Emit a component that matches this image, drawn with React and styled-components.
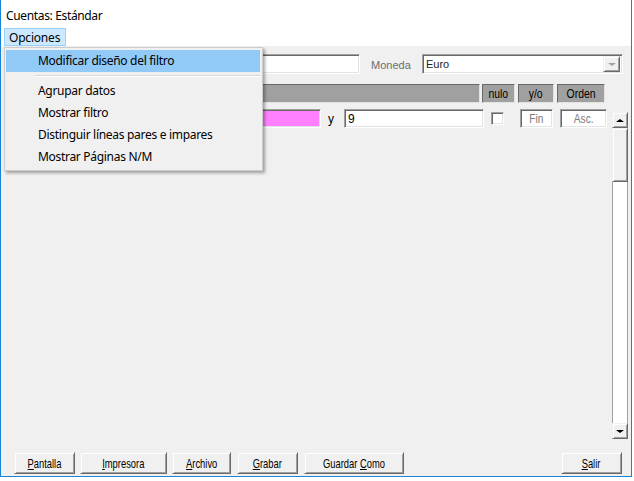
import React from "react";
import styled, { createGlobalStyle, css } from "styled-components";

const Global = createGlobalStyle`
  html, body { margin: 0; padding: 0; background: #ffffff; overflow: hidden; }
  * { box-sizing: border-box; }
`;

const uiFont = `"Segoe UI", "Noto Sans", "Liberation Sans", sans-serif`;
const formFont = `"Liberation Sans", Arial, sans-serif`;

const Window = styled.div`
  position: relative;
  width: 632px;
  height: 477px;
  border-left: 1px solid #1883d7;
  border-right: 1px solid #1883d7;
  border-bottom: 1px solid #1883d7;
  display: flex;
  flex-direction: column;
  background: #ffffff;
`;

const TitleBar = styled.div`
  height: 28px;
  padding: 2px 0 0 5px;
  display: flex;
  align-items: center;
  font-family: ${uiFont};
  font-size: 12px;
  letter-spacing: -0.35px;
  color: #000;
`;

const MenuBar = styled.div`
  height: 18px;
  padding-left: 3px;
  display: flex;
`;

const MenuBarItem = styled.div`
  height: 18px;
  width: 62px;
  padding-left: 4px;
  display: flex;
  align-items: center;
  background: ${(p) => (p.$open ? "#cce8ff" : "transparent")};
  border: 1px solid ${(p) => (p.$open ? "#99d1ff" : "transparent")};
  font-family: ${uiFont};
  font-size: 12px;
  letter-spacing: -0.2px;
  color: #000;
`;

const Content = styled.div`
  flex: 1;
  background: #f0f0f0;
  display: flex;
  flex-direction: column;
  font-family: ${formFont};
  font-size: 11px;
`;

const Row = styled.div`
  display: flex;
  align-items: center;
  margin-top: ${(p) => p.$mt}px;
  padding-left: ${(p) => p.$pl || 0}px;
  height: ${(p) => p.$h}px;
`;

const sunken = css`
  border: 1px solid;
  border-color: #a0a0a0 #ffffff #ffffff #a0a0a0;
  box-shadow: inset 1px 1px 0 #696969, inset -1px -1px 0 #e3e3e3;
`;

const TextBox = styled.div`
  ${sunken};
  width: ${(p) => p.$w}px;
  height: ${(p) => p.$h || 19}px;
  margin-left: ${(p) => p.$ml || 0}px;
  background: ${(p) => p.$bg || "#ffffff"};
  color: ${(p) => (p.$dim ? "#7a7a7a" : "#000")};
  display: flex;
  align-items: center;
  justify-content: ${(p) => (p.$center ? "center" : "flex-start")};
  padding-left: ${(p) => (p.$center ? 0 : 3)}px;
  font-family: ${formFont};
  font-size: ${(p) => (p.$big ? 12 : 11)}px;
`;

const Condensed = styled.span`
  display: inline-block;
  white-space: pre;
  transform: scaleX(${(p) => p.$k || 0.8});
`;

const Label = styled.div`
  width: ${(p) => p.$w}px;
  margin-left: ${(p) => p.$ml || 0}px;
  color: ${(p) => p.$color || "#6d6d6d"};
  font-size: ${(p) => p.$size || 11}px;
  padding-top: 1px;
`;

const Combo = styled(TextBox)`
  padding-right: 2px;
`;

const ComboText = styled.span`
  flex: 1;
  color: #222;
`;

const ComboButton = styled.div`
  width: 17px;
  height: 16px;
  background: #f0f0f0;
  border: 1px solid;
  border-color: #f0f0f0 #696969 #696969 #f0f0f0;
  box-shadow: inset 1px 1px 0 #ffffff, inset -1px -1px 0 #a0a0a0;
  display: flex;
  align-items: center;
  justify-content: center;
`;

const Arrow = styled.div`
  width: 0;
  height: 0;
  border-left: ${(p) => p.$s}px solid transparent;
  border-right: ${(p) => p.$s}px solid transparent;
  ${(p) =>
    p.$up
      ? `border-bottom: ${p.$s - 1}px solid ${p.$color};`
      : `border-top: ${p.$s - 1}px solid ${p.$color};`}
`;

const HeaderBar = styled.div`
  width: ${(p) => p.$w}px;
  height: 19px;
  margin-left: ${(p) => p.$ml || 0}px;
  background: #a0a0a0;
  border: 1px solid;
  border-color: #696969 #e3e3e3 #e3e3e3 #696969;
  display: flex;
  align-items: center;
  justify-content: center;
  color: #000;
  font-size: 13px;
  font-family: ${formFont};
`;

const FilterPanel = styled.div`
  display: flex;
  margin-top: 6px;
  height: 333px;
`;

const FilterRows = styled.div`
  display: flex;
  flex-direction: column;
  width: 611px;
`;

const CheckBox = styled.div`
  width: 13px;
  height: 13px;
  margin-left: ${(p) => p.$ml}px;
  background: #fff;
  border: 1px solid;
  border-color: #a0a0a0 #ffffff #ffffff #a0a0a0;
  box-shadow: inset 1px 1px 0 #696969, inset -1px -1px 0 #e3e3e3;
`;

const ScrollBar = styled.div`
  margin-top: 3px;
  width: 16px;
  height: 327px;
  display: flex;
  flex-direction: column;
`;

const raised = css`
  background: #f0f0f0;
  border: 1px solid;
  border-color: #f0f0f0 #696969 #696969 #f0f0f0;
  box-shadow: inset 1px 1px 0 #ffffff, inset -1px -1px 0 #a0a0a0;
`;

const ScrollButton = styled.div`
  ${raised};
  height: 16px;
  display: flex;
  align-items: center;
  justify-content: center;
`;

const Thumb = styled.div`
  ${raised};
  height: 54px;
`;

const Track = styled.div`
  flex: 1;
  background: #ffffff;
  border-left: 1px solid #a0a0a0;
  border-right: 1px solid #a0a0a0;
`;

const ButtonBar = styled.div`
  margin-top: auto;
  display: flex;
  padding: 0 9px 2px 13px;
`;

const PushButton = styled.div`
  ${raised};
  width: ${(p) => p.$w}px;
  height: 22px;
  margin-left: ${(p) => (p.$auto ? "auto" : `${p.$ml || 0}px`)};
  display: flex;
  align-items: center;
  justify-content: center;
  font-family: ${formFont};
  font-size: 13px;
  color: #000;
  padding-top: 1px;
`;

const Key = styled.span`
  text-decoration: underline;
`;

const Dropdown = styled.div`
  position: absolute;
  left: 3px;
  top: 47px;
  width: 259px;
  height: 124px;
  background: #f0f0f0;
  border: 1px solid #cccccc;
  box-shadow: 2px 2px 3px rgba(0, 0, 0, 0.35);
  padding: 2px 2px 3px 1px;
  display: flex;
  flex-direction: column;
  font-family: ${uiFont};
  font-size: 12px;
  letter-spacing: -0.3px;
  color: #000;
`;

const DropItem = styled.div`
  height: 22px;
  padding-left: 32px;
  display: flex;
  align-items: center;
  background: ${(p) => (p.$active ? "#91c9f7" : "transparent")};
`;

const Separator = styled.div`
  margin: 3px 0 3px 29px;
  height: 2px;
  border-top: 1px solid #d7d7d7;
  border-bottom: 1px solid #ffffff;
`;

const menuItems = [
  "Agrupar datos",
  "Mostrar filtro",
  "Distinguir líneas pares e impares",
  "Mostrar Páginas N/M",
];

export default function App() {
  return (
    <>
      <Global />
      <Window>
        <TitleBar>Cuentas: Estándar</TitleBar>
        <MenuBar>
          <MenuBarItem $open>Opciones</MenuBarItem>
        </MenuBar>
        <Content>
          <Row $mt={8} $h={20} $pl={99}>
            <TextBox $w={260} $h={20} />
            <Label $w={51} $ml={11}>Moneda</Label>
            <Combo $w={201} $h={20}>
              <ComboText>Euro</ComboText>
              <ComboButton>
                <Arrow $s={4} $color="#a0a0a0" />
              </ComboButton>
            </Combo>
          </Row>
          <Row $mt={10} $h={19} $pl={7}>
            <HeaderBar $w={472} />
            <HeaderBar $w={33} $ml={2}><Condensed $k={0.8}>nulo</Condensed></HeaderBar>
            <HeaderBar $w={36} $ml={3}><Condensed $k={0.8}>y/o</Condensed></HeaderBar>
            <HeaderBar $w={48} $ml={3}><Condensed $k={0.8}>Orden</Condensed></HeaderBar>
          </Row>
          <FilterPanel>
            <FilterRows>
              <Row $mt={0} $h={19} $pl={169}>
                <TextBox $w={151} $bg="#ff80ff" />
                <Label $w={16} $ml={7} $color="#000" $size={12}>y</Label>
                <TextBox $w={140} $big>9</TextBox>
                <CheckBox $ml={7} />
                <TextBox $w={33} $ml={16} $center $dim $big><Condensed $k={0.85}>Fin</Condensed></TextBox>
                <TextBox $w={47} $ml={7} $center $dim $big><Condensed $k={0.85}>Asc.</Condensed></TextBox>
              </Row>
            </FilterRows>
            <ScrollBar>
              <ScrollButton>
                <Arrow $up $s={4} $color="#000" />
              </ScrollButton>
              <Thumb />
              <Track />
              <ScrollButton>
                <Arrow $s={4} $color="#000" />
              </ScrollButton>
            </ScrollBar>
          </FilterPanel>
          <ButtonBar>
            <PushButton $w={61}><Condensed $k={0.72}><Key>P</Key>antalla</Condensed></PushButton>
            <PushButton $w={87} $ml={5}><Condensed $k={0.72}><Key>I</Key>mpresora</Condensed></PushButton>
            <PushButton $w={59} $ml={5}><Condensed $k={0.72}><Key>A</Key>rchivo</Condensed></PushButton>
            <PushButton $w={61} $ml={6}><Condensed $k={0.72}><Key>G</Key>rabar</Condensed></PushButton>
            <PushButton $w={100} $ml={6}><Condensed $k={0.72}>Guardar <Key>C</Key>omo</Condensed></PushButton>
            <PushButton $w={61} $auto><Condensed $k={0.72}><Key>S</Key>alir</Condensed></PushButton>
          </ButtonBar>
        </Content>
        <Dropdown>
          <DropItem $active>Modificar diseño del filtro</DropItem>
          <Separator />
          {menuItems.map((m) => (
            <DropItem key={m}>{m}</DropItem>
          ))}
        </Dropdown>
      </Window>
    </>
  );
}
